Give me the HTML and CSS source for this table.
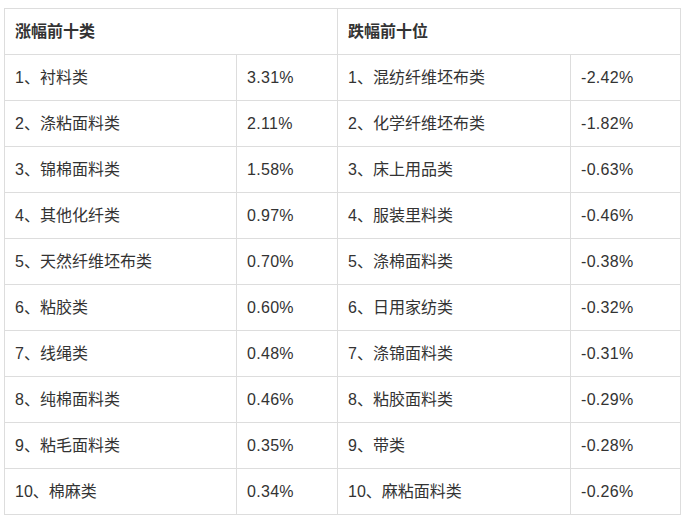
FILE: index.html
```html
<!DOCTYPE html>
<html lang="zh">
<head>
<meta charset="utf-8">
<link rel="stylesheet" href="styles.css">
</head>
<body>
<table class="rank">
  <colgroup>
    <col class="c-name-l">
    <col class="c-val-l">
    <col class="c-name-r">
    <col class="c-val-r">
  </colgroup>
  <tr class="head">
    <th colspan="2">涨幅前十类</th>
    <th colspan="2">跌幅前十位</th>
  </tr>
  <tr><td>1、衬料类</td><td>3.31%</td><td>1、混纺纤维坯布类</td><td>-2.42%</td></tr>
  <tr><td>2、涤粘面料类</td><td>2.11%</td><td>2、化学纤维坯布类</td><td>-1.82%</td></tr>
  <tr><td>3、锦棉面料类</td><td>1.58%</td><td>3、床上用品类</td><td>-0.63%</td></tr>
  <tr><td>4、其他化纤类</td><td>0.97%</td><td>4、服装里料类</td><td>-0.46%</td></tr>
  <tr><td>5、天然纤维坯布类</td><td>0.70%</td><td>5、涤棉面料类</td><td>-0.38%</td></tr>
  <tr><td>6、粘胶类</td><td>0.60%</td><td>6、日用家纺类</td><td>-0.32%</td></tr>
  <tr><td>7、线绳类</td><td>0.48%</td><td>7、涤锦面料类</td><td>-0.31%</td></tr>
  <tr><td>8、纯棉面料类</td><td>0.46%</td><td>8、粘胶面料类</td><td>-0.29%</td></tr>
  <tr><td>9、粘毛面料类</td><td>0.35%</td><td>9、带类</td><td>-0.28%</td></tr>
  <tr><td>10、棉麻类</td><td>0.34%</td><td>10、麻粘面料类</td><td>-0.26%</td></tr>
</table>
</body>
</html>
```
FILE: styles.css
```css
html, body {
  margin: 0;
  background: #fff;
}
body {
  padding: 8px 4px;
  font-family: "Liberation Sans", "Noto Sans CJK SC", sans-serif;
  font-size: 16px;
  color: #333;
}
.rank {
  border-collapse: collapse;
  table-layout: fixed;
  width: 676px;
}
.c-name-l { width: 232px; }
.c-val-l { width: 101px; }
.c-name-r { width: 233px; }
.c-val-r { width: 110px; }
.rank th,
.rank td {
  border: 1px solid #ddd;
  height: 46px;
  padding: 0 10px;
  text-align: left;
  vertical-align: middle;
  line-height: 20px;
  white-space: nowrap;
  box-sizing: border-box;
}
.rank th {
  font-weight: bold;
  color: #333;
}
.rank td {
  font-weight: normal;
}
.rank td:nth-child(even) {
  letter-spacing: 0.3px;
}
```
